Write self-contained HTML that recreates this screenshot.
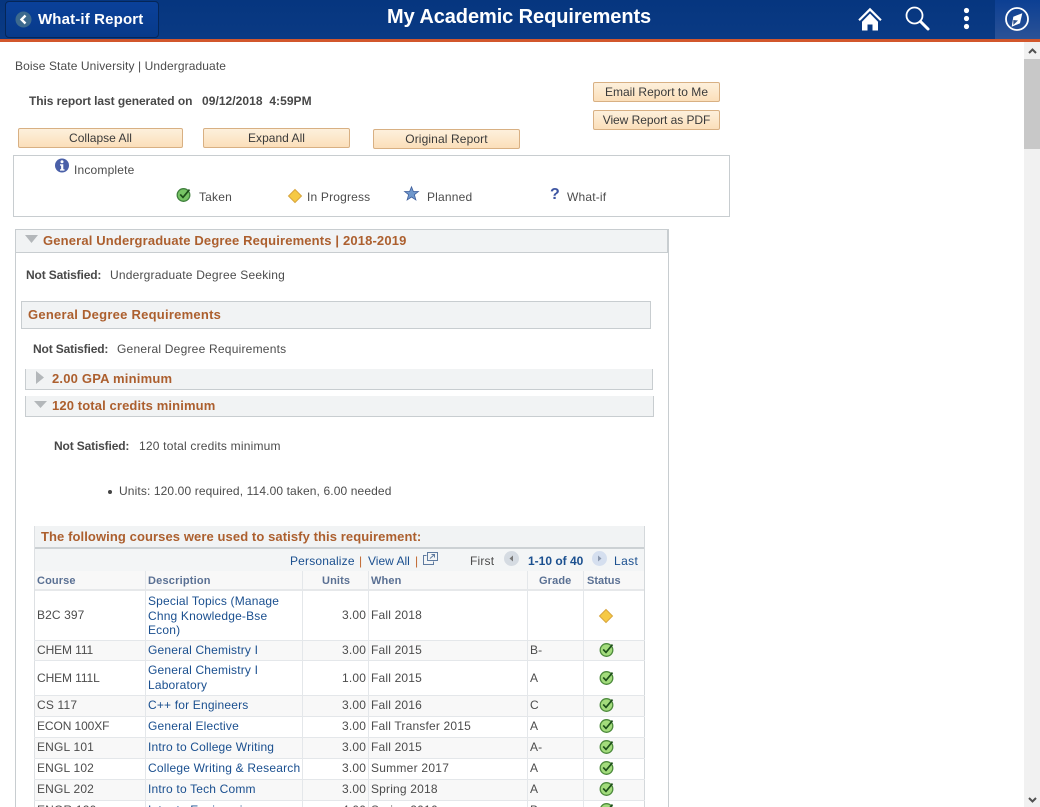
<!DOCTYPE html>
<html><head><meta charset="utf-8"><style>
html,body{margin:0;padding:0;width:1040px;height:807px;overflow:hidden;background:#fff}
body{position:relative;font:12px/14px "Liberation Sans",Arial,sans-serif;color:#4c4c4c;letter-spacing:.18px}
.a,.t,.btn,.l,.r{position:absolute}
.t,.l,.r{white-space:nowrap}
.l{color:#1a4f8f}
.b{font-weight:bold;letter-spacing:-.1px;color:#484848}
.o{color:#ac5f2e;font-weight:bold;font-size:13px;letter-spacing:.15px}
.btn{box-sizing:border-box;height:20px;border:1px solid #d8b083;border-radius:2px;background:linear-gradient(#fdf0dc,#fbdfba);color:#3a3a3a;text-align:center;line-height:18px;letter-spacing:.02px}
.h{color:#5a7093;font-weight:bold;font-size:11px;letter-spacing:.12px}
.vl{position:absolute;top:571px;height:236px;width:1px;background:#e4e7ea}
.hl{position:absolute;left:34px;width:611px;height:1px;background:#e4e7ea}
.alt{position:absolute;left:35px;width:609px;background:#f8f8f8}
.m{letter-spacing:-.1px}
svg{position:absolute;overflow:visible}
</style></head><body>
<svg width="0" height="0" style="position:absolute"><defs>
<g id="chk"><circle cx="7.500" cy="8" r="6.300" fill="#a3dc7c" stroke="#4d8a3c" stroke-width="1.300"/><path d="M4.200 7.400l2.800 3L13.500 2.600" fill="none" stroke="#1d4f1a" stroke-width="1.700"/></g>
<g id="chk2"><circle cx="7.500" cy="8" r="6.300" fill="#77c465" stroke="#3f7f3c" stroke-width="1.300"/><path d="M4.200 7.400l2.800 3L13.500 2.600" fill="none" stroke="#1d4f1a" stroke-width="1.700"/></g>
<g id="dia"><path d="M7 .5L13.500 7 7 13.500.5 7z" fill="#f6c944" stroke="#d8a63f"/></g>
</defs></svg>

<!-- header -->
<div class="a" style="left:0;top:0;width:1040px;height:39px;background:linear-gradient(#06367f,#0a3a84)"></div>
<div class="a" style="left:0;top:39px;width:1040px;height:3px;background:#d2572c"></div>
<div class="a" style="left:5px;top:1px;width:152px;height:35px;background:linear-gradient(#0a419a,#083a8a);border:1px solid #052658;border-radius:4px"></div>
<svg style="left:15px;top:11px" width="17" height="17"><circle cx="8.500" cy="8.500" r="8" fill="#3d6a8e"/><path d="M10.500 4.500L6.500 8.500l4 4" fill="none" stroke="#fff" stroke-width="2.400"/></svg>
<div class="t" style="left:38px;top:11px;font-size:15px;line-height:18px;color:#fff;font-weight:bold;letter-spacing:.15px">What-if Report</div>
<div class="t" style="left:387px;top:6px;font-size:20px;line-height:23px;color:#fff;font-weight:bold;letter-spacing:-.08px">My Academic Requirements</div>
<svg style="left:858px;top:7px" width="24" height="24"><path d="M.3 12.500L12 .8l11.700 11.700-1.500 1.500L12 4 1.800 14z" fill="#fff"/><path d="M4 14.800L12 6.500l8 8.300V23.500h-5.500v-6h-5v6H4z" fill="#fff"/></svg>
<svg style="left:905px;top:6px" width="25" height="25"><circle cx="9.500" cy="9.500" r="8" fill="none" stroke="#fff" stroke-width="1.800"/><path d="M15.500 15.500l7.500 7.500" stroke="#fff" stroke-width="3" stroke-linecap="round"/></svg>
<svg style="left:963px;top:7px" width="8" height="24"><circle cx="3.500" cy="3.500" r="2.600" fill="#fff"/><circle cx="3.500" cy="11.500" r="2.600" fill="#fff"/><circle cx="3.500" cy="19.500" r="2.600" fill="#fff"/></svg>
<div class="a" style="left:995px;top:0;width:45px;height:39px;background:linear-gradient(#0c3f93,#2b5296)"></div>
<svg style="left:1005px;top:7px" width="25" height="25"><circle cx="12" cy="12" r="11" fill="none" stroke="#fff" stroke-width="1.800"/><path d="M17.300 6.300L8.300 9.700 6.700 19.700 15 16.300z" fill="#fff"/><path d="M8.300 13L13 13.500 8.300 18z" fill="#33558f"/></svg>

<!-- scrollbar -->
<div class="a" style="left:1024px;top:42px;width:16px;height:765px;background:#f1f1f1"></div>
<div class="a" style="left:1024px;top:59px;width:16px;height:90px;background:#c8c8c8"></div>
<svg style="left:1028px;top:48px" width="9" height="6"><path d="M1 5l3.500-3.500L8 5" fill="none" stroke="#505050" stroke-width="2"/></svg>
<svg style="left:1028px;top:797px" width="9" height="6"><path d="M1 1l3.500 3.500L8 1" fill="none" stroke="#505050" stroke-width="2"/></svg>

<!-- top -->
<div class="t" style="left:15px;top:59px;letter-spacing:.1px">Boise State University | Undergraduate</div>
<div class="t b" style="left:29px;top:94px;letter-spacing:-.07px">This report last generated on</div>
<div class="t b" style="left:202px;top:94px;white-space:pre;letter-spacing:.05px">09/12/2018  4:59PM</div>
<div class="btn" style="left:593px;top:82px;width:127px">Email Report to Me</div>
<div class="btn" style="left:593px;top:110px;width:127px;letter-spacing:-.05px">View Report as PDF</div>
<div class="btn" style="left:18px;top:128px;width:165px">Collapse All</div>
<div class="btn" style="left:203px;top:128px;width:147px">Expand All</div>
<div class="btn" style="left:373px;top:129px;width:147px;letter-spacing:.12px">Original Report</div>

<!-- legend -->
<div class="a" style="left:13px;top:155px;width:715px;height:60px;border:1px solid #c8cdd0"></div>
<svg style="left:55px;top:158px" width="16" height="16"><circle cx="7" cy="7.500" r="7" fill="#4a60a8"/><circle cx="7" cy="3.800" r="1.500" fill="#fff"/><path d="M5 6.300h3.300v5h1.200v1.300H5v-1.300h1.100V7.600H5z" fill="#fff"/></svg>
<div class="t" style="left:74px;top:163px">Incomplete</div>
<svg style="left:176px;top:187px" width="16" height="16"><use href="#chk2"/></svg>
<div class="t" style="left:199px;top:190px">Taken</div>
<svg style="left:288px;top:189px" width="14" height="14"><use href="#dia"/></svg>
<div class="t" style="left:307px;top:190px">In Progress</div>
<svg style="left:404px;top:186px" width="15" height="15"><path d="M7.500 .8l1.900 4.700h5l-4 3.200 1.500 5.200-4.400-2.900-4.400 2.900 1.500-5.200-4-3.200h5z" fill="#6f97cc" stroke="#3f5f9c" stroke-width=".8"/></svg>
<div class="t" style="left:427px;top:190px">Planned</div>
<div class="t" style="left:550px;top:186px;font-size:16px;line-height:18px;font-weight:bold;color:#3e55a2">?</div>
<div class="t" style="left:567px;top:190px">What-if</div>

<!-- outer section -->
<div class="a" style="left:15px;top:229px;width:652px;height:600px;border:1px solid #c8cdd0"></div>
<div class="a" style="left:16px;top:230px;width:651px;height:22px;background:#f1f3f4;border-bottom:1px solid #c8cdd0"></div>
<div class="a" style="left:667px;top:230px;width:2px;height:23px;background:#c8cdd0"></div>
<svg style="left:25px;top:235px" width="14" height="9"><path d="M0 0h13L6.500 8z" fill="#b3b7ba"/></svg>
<div class="t o" style="left:43px;top:233px;line-height:15px">General Undergraduate Degree Requirements | 2018-2019</div>
<div class="t b" style="left:26px;top:268px;letter-spacing:-.15px">Not Satisfied:</div>
<div class="t" style="left:110px;top:268px;letter-spacing:.2px">Undergraduate Degree Seeking</div>

<div class="a" style="left:21px;top:301px;width:628px;height:26px;background:#f1f3f4;border:1px solid #c8cdd0"></div>
<div class="t o" style="left:28px;top:307px;line-height:15px;letter-spacing:.25px">General Degree Requirements</div>
<div class="t b" style="left:33px;top:342px;letter-spacing:-.15px">Not Satisfied:</div>
<div class="t" style="left:117px;top:342px;letter-spacing:.22px">General Degree Requirements</div>

<div class="a" style="left:25px;top:369px;width:626px;height:20px;background:#f1f3f4;border:1px solid #c8cdd0;border-top:none"></div>
<svg style="left:36px;top:371px" width="9" height="14"><path d="M0 0l8 6.500L0 13z" fill="#b3b7ba"/></svg>
<div class="t o" style="left:52px;top:371px;line-height:15px;letter-spacing:.2px">2.00 GPA minimum</div>
<div class="a" style="left:25px;top:396px;width:627px;height:20px;background:#f1f3f4;border:1px solid #c8cdd0;border-top:none"></div>
<svg style="left:34px;top:401px" width="14" height="9"><path d="M0 0h13L6.500 7z" fill="#b3b7ba"/></svg>
<div class="t o" style="left:52px;top:398px;line-height:15px;letter-spacing:.12px">120 total credits minimum</div>

<div class="t b" style="left:54px;top:439px;letter-spacing:-.15px">Not Satisfied:</div>
<div class="t" style="left:139px;top:439px;letter-spacing:.2px">120 total credits minimum</div>
<div class="a" style="left:108px;top:490px;width:4px;height:4px;border-radius:2px;background:#444"></div>
<div class="t" style="left:119px;top:484px;letter-spacing:.12px">Units: 120.00 required, 114.00 taken, 6.00 needed</div>

<!-- table -->
<div class="a" style="left:34px;top:526px;width:611px;height:22px;background:#f1f3f4"></div>
<div class="a" style="left:34px;top:547px;width:611px;height:2px;background:#ccd1d4"></div>
<div class="a" style="left:34px;top:549px;width:611px;height:22px;background:#f3f5f6"></div>
<div class="a" style="left:34px;top:571px;width:611px;height:19px;background:#f8f8f8"></div>
<div class="a" style="left:34px;top:589px;width:611px;height:2px;background:#e6e8ea"></div>
<div class="alt" style="top:641px;height:19px"></div>
<div class="alt" style="top:696px;height:20px"></div>
<div class="alt" style="top:738px;height:20px"></div>
<div class="alt" style="top:780px;height:20px"></div>
<div class="a" style="left:34px;top:526px;width:1px;height:281px;background:#dde0e3"></div>
<div class="a" style="left:644px;top:526px;width:1px;height:281px;background:#d4d8db"></div>
<div class="vl" style="left:145px"></div><div class="vl" style="left:302px"></div><div class="vl" style="left:368px"></div><div class="vl" style="left:527px"></div><div class="vl" style="left:583px"></div>
<div class="hl" style="top:640px"></div><div class="hl" style="top:660px"></div><div class="hl" style="top:695px"></div><div class="hl" style="top:716px"></div><div class="hl" style="top:737px"></div><div class="hl" style="top:758px"></div><div class="hl" style="top:779px"></div><div class="hl" style="top:800px"></div>

<div class="t o" style="left:41px;top:529px;line-height:15px;letter-spacing:.09px">The following courses were used to satisfy this requirement:</div>
<div class="l" style="left:290px;top:554px">Personalize</div><div class="t" style="left:359px;top:554px;color:#c0672e">|</div>
<div class="l" style="left:368px;top:554px;letter-spacing:0">View All</div><div class="t" style="left:415px;top:554px;color:#c0672e">|</div>
<svg style="left:423px;top:552px" width="15" height="13"><path d="M3.500 3.500H.5v9h10V9.500" fill="none" stroke="#5f7ba0"/><path d="M4.500 .5h10v8h-10z" fill="none" stroke="#5f7ba0"/><path d="M7 6.500l4.500-4M8.500 2.500h3v3" fill="none" stroke="#5f7ba0"/></svg>
<div class="t" style="left:470px;top:554px">First</div>
<svg style="left:504px;top:551px" width="15" height="15"><circle cx="7.500" cy="7.500" r="7.500" fill="#d5dbe2"/><path d="M9 4.500L5.500 7.500 9 10.500z" fill="#777"/></svg>
<div class="l" style="left:528px;top:554px;font-weight:bold;letter-spacing:0">1-10 of 40</div>
<svg style="left:592px;top:551px" width="15" height="15"><circle cx="7.500" cy="7.500" r="7.500" fill="#d5dfef"/><path d="M6 4.500l3.500 3-3.500 3z" fill="#8a97ad"/></svg>
<div class="l" style="left:614px;top:554px;letter-spacing:.4px">Last</div>

<div class="t h" style="left:37px;top:574px">Course</div>
<div class="t h" style="left:148px;top:574px;letter-spacing:.2px">Description</div>
<div class="t h" style="left:322px;top:574px">Units</div>
<div class="t h" style="left:371px;top:574px">When</div>
<div class="t h" style="left:539px;top:574px">Grade</div>
<div class="t h" style="left:587px;top:574px;letter-spacing:0">Status</div>

<div class="t" style="left:37px;top:608px;letter-spacing:.1px">B2C 397</div>
<div class="l" style="left:148px;top:594px;line-height:14.500px">Special Topics (Manage<br>Chng Knowledge-Bse<br>Econ)</div>
<div class="t" style="left:342px;top:608px">3.00</div><div class="t" style="left:371px;top:608px">Fall 2018</div>
<svg style="left:599px;top:609px" width="14" height="14"><use href="#dia"/></svg>

<div class="t m" style="left:37px;top:643px">CHEM 111</div><div class="l" style="left:148px;top:643px">General Chemistry I</div><div class="t" style="left:342px;top:643px">3.00</div><div class="t" style="left:371px;top:643px">Fall 2015</div><div class="t" style="left:530px;top:643px">B-</div>
<svg style="left:599px;top:642px" width="16" height="16"><use href="#chk"/></svg>

<div class="t m" style="left:37px;top:671px">CHEM 111L</div><div class="l" style="left:148px;top:663px;line-height:15px">General Chemistry I<br>Laboratory</div><div class="t" style="left:342px;top:671px">1.00</div><div class="t" style="left:371px;top:671px">Fall 2015</div><div class="t" style="left:530px;top:671px">A</div>
<svg style="left:599px;top:670px" width="16" height="16"><use href="#chk"/></svg>

<div class="t" style="left:37px;top:698px">CS 117</div><div class="l" style="left:148px;top:698px">C++ for Engineers</div><div class="t" style="left:342px;top:698px">3.00</div><div class="t" style="left:371px;top:698px">Fall 2016</div><div class="t" style="left:530px;top:698px">C</div>
<svg style="left:599px;top:697px" width="16" height="16"><use href="#chk"/></svg>

<div class="t m" style="left:37px;top:719px">ECON 100XF</div><div class="l" style="left:148px;top:719px">General Elective</div><div class="t" style="left:342px;top:719px">3.00</div><div class="t" style="left:371px;top:719px">Fall Transfer 2015</div><div class="t" style="left:530px;top:719px">A</div>
<svg style="left:599px;top:718px" width="16" height="16"><use href="#chk"/></svg>

<div class="t" style="left:37px;top:740px">ENGL 101</div><div class="l" style="left:148px;top:740px">Intro to College Writing</div><div class="t" style="left:342px;top:740px">3.00</div><div class="t" style="left:371px;top:740px">Fall 2015</div><div class="t" style="left:530px;top:740px">A-</div>
<svg style="left:599px;top:739px" width="16" height="16"><use href="#chk"/></svg>

<div class="t" style="left:37px;top:761px">ENGL 102</div><div class="l" style="left:148px;top:761px;letter-spacing:.2px">College Writing &amp; Research</div><div class="t" style="left:342px;top:761px">3.00</div><div class="t" style="left:371px;top:761px;letter-spacing:.25px">Summer 2017</div><div class="t" style="left:530px;top:761px">A</div>
<svg style="left:599px;top:760px" width="16" height="16"><use href="#chk"/></svg>

<div class="t" style="left:37px;top:782px">ENGL 202</div><div class="l" style="left:148px;top:782px">Intro to Tech Comm</div><div class="t" style="left:342px;top:782px">3.00</div><div class="t" style="left:371px;top:782px">Spring 2018</div><div class="t" style="left:530px;top:782px">A</div>
<svg style="left:599px;top:781px" width="16" height="16"><use href="#chk"/></svg>

<div class="t" style="left:37px;top:803px">ENGR 120</div><div class="l" style="left:148px;top:803px">Intro to Engineering</div><div class="t" style="left:342px;top:803px">4.00</div><div class="t" style="left:371px;top:803px">Spring 2016</div><div class="t" style="left:530px;top:803px">B</div>
<svg style="left:599px;top:802px" width="16" height="16"><use href="#chk"/></svg>
</body></html>
